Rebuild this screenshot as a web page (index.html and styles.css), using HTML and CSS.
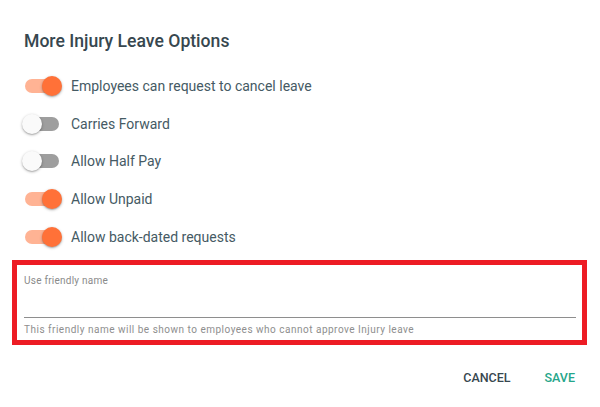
FILE: index.html
```html
<!DOCTYPE html>
<html lang="en">
<head>
<meta charset="utf-8">
<title>More Injury Leave Options</title>
<link rel="stylesheet" href="styles.css">
</head>
<body>
<div class="dialog">
  <h2 class="title">More Injury Leave Options</h2>
  <div class="options">
    <label class="row"><span class="switch on"><span class="thumb"></span></span><span class="label">Employees can request to cancel leave</span></label>
    <label class="row"><span class="switch"><span class="thumb"></span></span><span class="label">Carries Forward</span></label>
    <label class="row"><span class="switch"><span class="thumb"></span></span><span class="label">Allow Half Pay</span></label>
    <label class="row"><span class="switch on"><span class="thumb"></span></span><span class="label">Allow Unpaid</span></label>
    <label class="row"><span class="switch on"><span class="thumb"></span></span><span class="label">Allow back-dated requests</span></label>
  </div>
  <div class="highlight">
    <div class="field-label">Use friendly name</div>
    <div class="field-input"></div>
    <div class="field-hint">This friendly name will be shown to employees who cannot approve Injury leave</div>
  </div>
  <div class="actions">
    <button class="btn cancel">CANCEL</button>
    <button class="btn save">SAVE</button>
  </div>
</div>
</body>
</html>
```
FILE: styles.css
```css
html, body {
  margin: 0;
  padding: 0;
  background: #ffffff;
}
body {
  font-family: Roboto, "Liberation Sans", sans-serif;
  width: 600px;
  height: 407px;
  overflow: hidden;
}
.dialog {
  display: flex;
  flex-direction: column;
}
.title {
  margin: 0;
  padding: 29px 24px 0;
  font-size: 17.6px;
  line-height: 24px;
  font-weight: 500;
  color: #37474f;
}
.options {
  margin-top: 14px;
  padding-left: 25px;
  display: flex;
  flex-direction: column;
}
.row {
  height: 37.75px;
  display: flex;
  align-items: center;
  gap: 12px;
}
.switch {
  position: relative;
  width: 34px;
  height: 14px;
  border-radius: 7px;
  background: #9e9e9e;
  flex: none;
}
.switch .thumb {
  position: absolute;
  top: -3px;
  left: -3px;
  width: 20px;
  height: 20px;
  border-radius: 50%;
  background: #fafafa;
  box-shadow: 0 1px 3px rgba(0,0,0,0.3), 0 1px 1px rgba(0,0,0,0.12);
}
.switch.on {
  background: #ffb394;
}
.switch.on .thumb {
  left: auto;
  right: -3px;
  background: #ff7138;
}
.label {
  font-size: 14px;
  color: #455a64;
}
.highlight {
  margin: 4px 13px 0 12px;
  border: 5px solid #ed1c24;
  padding: 10px 6px 4px 7px;
  display: flex;
  flex-direction: column;
}
.field-label {
  font-size: 10px;
  line-height: 12px;
  color: #8a8a8a;
  letter-spacing: 0.25px;
}
.field-input {
  height: 30px;
  border-bottom: 1px solid #8e8e8e;
}
.field-hint {
  margin-top: 6px;
  font-size: 10px;
  line-height: 12px;
  color: #8e8e8e;
  letter-spacing: 0.5px;
}
.actions {
  margin-top: 15px;
  display: flex;
  justify-content: flex-end;
  gap: 34px;
  padding-right: 25px;
}
.btn {
  border: 0;
  background: transparent;
  padding: 0;
  height: 36px;
  font-family: Roboto, "Liberation Sans", sans-serif;
  font-size: 12.5px;
  font-weight: 500;
  letter-spacing: 0;
}
.cancel { color: #37474f; }
.save { color: #26a68a; }
```
